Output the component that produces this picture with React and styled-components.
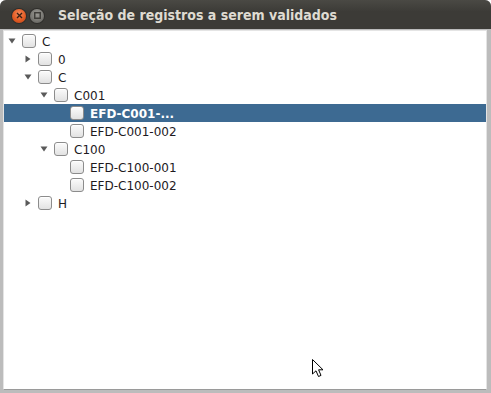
import React from "react";
import styled, { createGlobalStyle } from "styled-components";

const Global = createGlobalStyle`
  html, body { margin: 0; padding: 0; background: #ffffff; }
  body { width: 491px; height: 393px; overflow: hidden; }
  #root { width: 491px; height: 393px; }
`;

const Window = styled.div`
  position: relative;
  width: 491px;
  height: 393px;
  display: flex;
  flex-direction: column;
  background: #bdbdbd;
  border-radius: 6px 6px 0 0;
  overflow: hidden;
`;

const TitleBar = styled.div`
  height: 29px;
  flex: none;
  display: flex;
  align-items: center;
  padding-left: 12px;
  gap: 4px;
  background: linear-gradient(#4a4944, #3c3b37 40%, #3c3b37);
  box-sizing: border-box;
`;

const CircleButton = styled.div`
  width: 14px;
  height: 14px;
  border-radius: 50%;
  display: flex;
  align-items: center;
  justify-content: center;
  margin-top: 2px;
  background: ${(p) =>
    p.$close
      ? "radial-gradient(circle at 50% 35%, #f58a5c, #e35b23 55%, #b4441a)"
      : "radial-gradient(circle at 50% 35%, #9a9994, #7a7974 55%, #5c5b57)"};
  box-shadow: 0 0 0 1px #2f2e2b;
`;

const Title = styled.div`
  margin-left: 10px;
  font-family: "DejaVu Sans Condensed", "DejaVu Sans", sans-serif;
  font-stretch: condensed;
  font-weight: bold;
  font-size: 14px;
  color: #dfdbd2;
  margin-top: 1px;
`;

const Frame = styled.div`
  flex: 1;
  display: flex;
  padding: 1px 4px 3px 3px;
  background: #bcbcbc;
`;

const Panel = styled.div`
  flex: 1;
  background: #ffffff;
  border: 1px solid #e4e4e4;
  border-bottom: 1px solid #9a9a9a;
  padding-top: 1px;
  display: flex;
  flex-direction: column;
`;

const Row = styled.div`
  height: 18px;
  display: flex;
  align-items: center;
  padding-left: ${(p) => p.$level * 16}px;
  background: ${(p) => (p.$selected ? "#3d6a92" : "transparent")};
  font-family: "DejaVu Sans", sans-serif;
  font-size: 12px;
  color: ${(p) => (p.$selected ? "#ffffff" : "#1e1a1e")};
  font-weight: ${(p) => (p.$selected ? "bold" : "normal")};
`;

const Handle = styled.div`
  width: 16px;
  height: 18px;
  flex: none;
  display: flex;
  align-items: center;
  justify-content: center;
`;

const Check = styled.div`
  width: 12px;
  height: 12px;
  flex: none;
  margin-left: 2px;
  margin-right: 6px;
  border: 1px solid #8c8c8c;
  border-radius: 3px;
  background: linear-gradient(#fbfbfb, #e2e2e2);
  box-shadow: inset 0 1px 0 #ffffff;
`;

const Label = styled.span`
  white-space: nowrap;
  line-height: 18px;
  margin-top: 1px;
`;

const Cursor = styled.svg`
  position: absolute;
  left: 311px;
  top: 358px;
`;

function Triangle({ open }) {
  return open ? (
    <svg width="8" height="6" viewBox="0 0 8 6">
      <path d="M0.5 0.5 L7.5 0.5 L4 5.5 Z" fill="#5a5a5a" />
    </svg>
  ) : (
    <svg width="6" height="8" viewBox="0 0 6 8">
      <path d="M0.5 0.5 L5.5 4 L0.5 7.5 Z" fill="#5a5a5a" />
    </svg>
  );
}

const rows = [
  { level: 0, label: "C", handle: "open" },
  { level: 1, label: "0", handle: "closed" },
  { level: 1, label: "C", handle: "open" },
  { level: 2, label: "C001", handle: "open" },
  { level: 3, label: "EFD-C001-...", selected: true },
  { level: 3, label: "EFD-C001-002" },
  { level: 2, label: "C100", handle: "open" },
  { level: 3, label: "EFD-C100-001" },
  { level: 3, label: "EFD-C100-002" },
  { level: 1, label: "H", handle: "closed" },
];

export default function App() {
  return (
    <>
      <Global />
      <Window>
        <TitleBar>
          <CircleButton $close>
            <svg width="7" height="7" viewBox="0 0 7 7">
              <path d="M1 1 L6 6 M6 1 L1 6" stroke="#3a2014" strokeWidth="1.4" />
            </svg>
          </CircleButton>
          <CircleButton>
            <svg width="7" height="7" viewBox="0 0 7 7">
              <rect x="0.75" y="0.75" width="5.5" height="5.5" fill="none" stroke="#3c3b37" strokeWidth="1.4" />
            </svg>
          </CircleButton>
          <Title>Seleção de registros a serem validados</Title>
        </TitleBar>
        <Frame>
          <Panel>
            {rows.map((r, i) => (
              <Row key={i} $level={r.level} $selected={r.selected}>
                <Handle>{r.handle && <Triangle open={r.handle === "open"} />}</Handle>
                <Check />
                <Label>{r.label}</Label>
              </Row>
            ))}
          </Panel>
        </Frame>
        <Cursor width="13" height="21" viewBox="0 0 13 21">
          <path
            d="M1.5 1.5 L1.5 16 L5 12.8 L7.5 18.5 L10 17.4 L7.6 11.8 L12 11.8 Z"
            fill="#ffffff"
            stroke="#000000"
            strokeWidth="1"
            strokeLinejoin="round"
          />
        </Cursor>
      </Window>
    </>
  );
}
